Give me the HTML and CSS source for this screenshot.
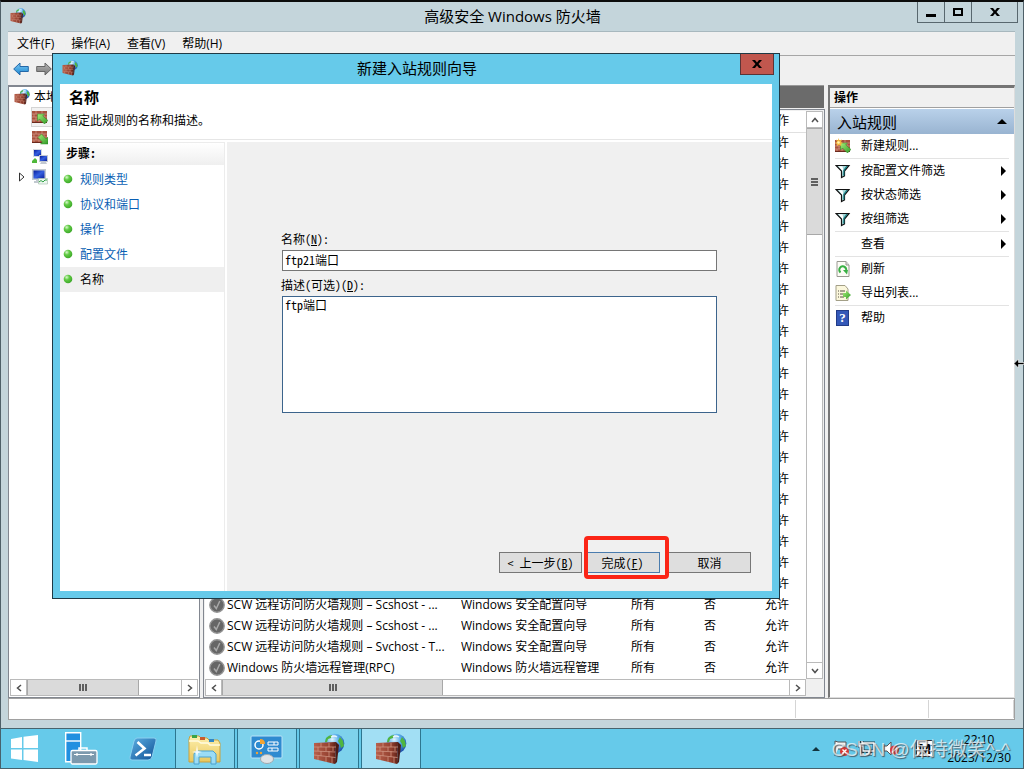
FILE: index.html
```html
<!DOCTYPE html>
<html lang="zh-CN">
<head>
<meta charset="utf-8">
<title>高级安全 Windows 防火墙</title>
<link rel="stylesheet" href="styles.css">
</head>
<body>
<svg class="defs" aria-hidden="true">
  <defs>
    <radialGradient id="globe" cx=".38" cy=".3" r=".75"><stop offset="0" stop-color="#e2f6ff"/><stop offset=".45" stop-color="#58aeea"/><stop offset="1" stop-color="#1747a4"/></radialGradient>
    <linearGradient id="brick" x1="0" x2="1"><stop offset="0" stop-color="#b8604c"/><stop offset=".7" stop-color="#93402f"/><stop offset="1" stop-color="#5c2018"/></linearGradient>
    <linearGradient id="blue" x1="0" y1="0" x2="0" y2="1"><stop offset="0" stop-color="#7cc9f4"/><stop offset="1" stop-color="#1b86d0"/></linearGradient>
    <linearGradient id="grey" x1="0" y1="0" x2="0" y2="1"><stop offset="0" stop-color="#b5b5b5"/><stop offset="1" stop-color="#777"/></linearGradient>
    <linearGradient id="screen" x1="0" y1="0" x2="1" y2="1"><stop offset="0" stop-color="#0a1f9c"/><stop offset=".5" stop-color="#3560e0"/><stop offset="1" stop-color="#0a1f9c"/></linearGradient>
    <linearGradient id="folder" x1="0" y1="0" x2="0" y2="1"><stop offset="0" stop-color="#fdf0ae"/><stop offset="1" stop-color="#e9c75c"/></linearGradient>
    <linearGradient id="shell" x1="0" y1="0" x2="1" y2="1"><stop offset="0" stop-color="#5cb0e4"/><stop offset="1" stop-color="#0f4f94"/></linearGradient>
    <linearGradient id="leaf" x1="0" y1="0" x2="1" y2="1"><stop offset="0" stop-color="#a4ec78"/><stop offset="1" stop-color="#2f9a26"/></linearGradient>
    <radialGradient id="bead" cx=".35" cy=".3" r=".75"><stop offset="0" stop-color="#d8f7cc"/><stop offset=".4" stop-color="#62cb45"/><stop offset="1" stop-color="#3aa627"/></radialGradient>
    <symbol id="i-firewall" viewBox="0 0 32 32">
      <circle cx="21.500" cy="10.500" r="9.800" fill="url(#globe)"/>
      <path d="M13 5q3-3 6-3l-1 3-3 1-1 3-2 0zM27 4l3 4 1 5-3 2-1-4-2-3z" fill="#4fb63e"/>
      <path d="M18 4q3-2 6 0" stroke="#fff" stroke-width="1.500" fill="none" opacity=".8"/>
      <path d="M1 10l22-1-1 22-21-5z" fill="url(#brick)"/>
      <path d="M23 9l3 3-2 17-2 2z" fill="#4d1b14"/>
      <path d="M1 14l22 0M1 18l21.500 1M1 22l21.500 2.500M8 10v4M16 10v4M5 14v4M13 14v4M20 14v4M8 18v5M16 18v6M5 23v4M13 24v5M19 24v6" stroke="#cf9482" stroke-width=".8" fill="none"/>
    </symbol>
    <symbol id="i-wall" viewBox="0 0 16 16">
      <path d="M0 2h15v12H0z" fill="#a8523e"/><path d="M0 5h15M0 8h15M0 11h15M4 2v3M10 2v3M2 5v3M7 5v3M12 5v3M4 8v3M10 8v3M2 11v3M7 11v3" stroke="#cf9583" stroke-width=".8" fill="none"/><path d="M0 13.500h15" stroke="#6c2a1e"/>
    </symbol>
    <symbol id="i-in" viewBox="0 0 16 16"><use href="#i-wall"/><path d="M5.500 5h7l-1.800 1.900L16 11.500 12.500 15 7.500 10l-2 2z" fill="url(#leaf)" stroke="#2f8a28" stroke-width=".5"/></symbol>
    <symbol id="i-out" viewBox="0 0 16 16"><use href="#i-wall"/><path d="M16 15H8.500l2-2L6 8.500 9.500 5l4.500 4.800L16 8z" fill="url(#leaf)" stroke="#2f8a28" stroke-width=".5"/></symbol>
    <symbol id="i-new" viewBox="0 0 16 16"><use href="#i-in"/><path d="M3.500 0l1 2.500L7 1.500 6 4l2 1-2 1 .500 2-2.500-1L2 8V6L0 5l2-1L1 1.500l2 1z" fill="#f5b83d"/><circle cx="3.500" cy="4.500" r="1.300" fill="#fff6b0"/></symbol>
    <symbol id="i-net" viewBox="0 0 16 16"><path d="M1 0h9v8H1z" fill="#d4d9e0"/><path d="M2 1h7v6H2z" fill="url(#screen)"/><path d="M7 6h9v7H7zM9 13h5l1 2H8z" fill="#c3c9d2"/><path d="M8 7h7v5H8z" fill="url(#screen)"/><path d="M0 12l3-3 2 2v3H0z" fill="#4fb83a"/></symbol>
    <symbol id="i-monitor" viewBox="0 0 16 16"><path d="M0 0h14v11H0zM4 11h5v1h3v2H2v-2h2z" fill="#c2c9d0"/><path d="M1.500 1.500h11v8h-11z" fill="url(#screen)"/><path d="M6.500 9.500h9v5.500h-9z" fill="#eef8f1" stroke="#9fb8a8" stroke-width=".6"/><path d="M7 13l2-1.500 2 1.500 2-2 2 0" stroke="#2ea043" fill="none"/></symbol>
    <symbol id="i-filter" viewBox="0 0 16 16"><path d="M1 2.500h13L9.500 8v5l-3 1.500V8z" fill="#a6d6d8" stroke="#111" stroke-width="1.200"/><path d="M3.500 3.200h4l1 5v4L7.500 8z" fill="#fff"/><path d="M12 3.200L8.800 7.500v5" stroke="#177f84" stroke-width="1.200" fill="none"/></symbol>
    <symbol id="i-refresh" viewBox="0 0 16 16"><path d="M2 .500h9L14 4v11.500H2z" fill="#fcfcf6" stroke="#9a9a92"/><path d="M11 .500V4h3" fill="#ddd" stroke="#9a9a92"/><path d="M5.500 11.500A3.500 3.500 0 1 1 10.500 11" fill="none" stroke="#39b044" stroke-width="2"/><path d="M8 9l5 0-1 4.500z" fill="#39b044"/></symbol>
    <symbol id="i-export" viewBox="0 0 16 16"><path d="M1 .500h9L13 4v11.500H1z" fill="#fbf7dc" stroke="#a39f87"/><path d="M3 6h1M3 9h1M3 12h1M5 6h5M5 9h4M5 12h4" stroke="#554f44"/><path d="M8 8h3V5.500l5 4.500-5 4.500V12H8z" fill="url(#leaf)"/></symbol>
    <symbol id="i-check" viewBox="0 0 16 16"><circle cx="8" cy="8" r="7.200" fill="#666" stroke="#949494" stroke-width="1.400"/><path d="M5 8.500L7.300 11.500l3.500-7.500" fill="none" stroke="#a8a8a8" stroke-width="1.500"/></symbol>
    <symbol id="i-close" viewBox="0 0 10 8"><path d="M0 0h3l2 2.500L7 0h3L6.500 4 10 8H7L5 5.500 3 8H0l3.500-4z" fill="#000"/></symbol>
    <symbol id="i-chev" viewBox="0 0 8 8"><path d="M1 6l3-3.500L7 6" fill="none" stroke="#505050" stroke-width="1.500"/></symbol>
    <symbol id="i-tri" viewBox="0 0 6 12"><path d="M0 1l5 5-5 5z"/></symbol>
    <symbol id="i-bead" viewBox="0 0 10 10"><circle cx="5" cy="5" r="4.300" fill="url(#bead)"/></symbol>
  </defs>
</svg>

<main class="window">
  <header class="titlebar">
    <svg class="ic16"><use href="#i-firewall"/></svg>
    <h1 class="title">高级安全 Windows 防火墙</h1>
    <div class="winbtns">
      <button class="winbtn" aria-label="最小化"><svg width="10" height="12"><path d="M0 8h10v3H0z"/></svg></button>
      <button class="winbtn" aria-label="最大化"><svg width="10" height="10"><path d="M1 2h8v6H1z" fill="none" stroke="#000" stroke-width="2"/></svg></button>
      <button class="winbtn winbtn-close" aria-label="关闭"><svg width="10" height="8"><use href="#i-close"/></svg></button>
    </div>
  </header>

  <div class="client">
    <nav class="menubar">
      <button class="menu">文件(F)</button><button class="menu">操作(A)</button><button class="menu">查看(V)</button><button class="menu">帮助(H)</button>
    </nav>
    <div class="toolbar">
      <button class="tool" aria-label="后退"><svg width="16" height="14" viewBox="0 0 16 14"><path d="M.700 7L7 1v3.500h8.300v5H7V13z" fill="url(#blue)" stroke="#2468a8"/></svg></button>
      <button class="tool" aria-label="前进"><svg width="16" height="14" viewBox="0 0 16 14"><path d="M15.300 7L9 1v3.500H.700v5H9V13z" fill="url(#grey)" stroke="#666"/></svg></button>
    </div>

    <div class="panes">
      <section class="tree-pane">
        <ul class="tree">
          <li class="node"><svg class="ic16"><use href="#i-firewall"/></svg><span>本地计算机</span></li>
          <li class="node child"><span class="picked"><svg class="ic16"><use href="#i-in"/></svg></span></li>
          <li class="node child"><svg class="ic16"><use href="#i-out"/></svg></li>
          <li class="node child"><svg class="ic16"><use href="#i-net"/></svg></li>
          <li class="node parent"><svg width="6" height="10"><path d="M.500 1l4.500 4-4.500 4z" fill="#fff" stroke="#333"/></svg><svg class="ic16"><use href="#i-monitor"/></svg></li>
        </ul>
        <div class="hbar">
          <button class="sbtn" aria-label="向左"><svg class="chev left"><use href="#i-chev"/></svg></button>
          <div class="track"><div class="thumb thumb-tree"><i class="grip"></i></div></div>
          <button class="sbtn" aria-label="向右"><svg class="chev right"><use href="#i-chev"/></svg></button>
        </div>
      </section>

      <section class="center-pane">
        <div class="caption"></div>
        <div class="list">
          <div class="rows">
            <table class="rules">
              <colgroup><col class="c-name"><col class="c-group"><col class="c-profile"><col class="c-on"><col></colgroup>
              <thead><tr><th></th><th></th><th></th><th></th><th>操作</th></tr></thead>
              <tbody>
                <tr><td colspan="4"></td><td>允许</td></tr>
                <tr><td colspan="4"></td><td>允许</td></tr>
                <tr><td colspan="4"></td><td>允许</td></tr>
                <tr><td colspan="4"></td><td>允许</td></tr>
                <tr><td colspan="4"></td><td>允许</td></tr>
                <tr><td colspan="4"></td><td>允许</td></tr>
                <tr><td colspan="4"></td><td>允许</td></tr>
                <tr><td colspan="4"></td><td>允许</td></tr>
                <tr><td colspan="4"></td><td>允许</td></tr>
                <tr><td colspan="4"></td><td>允许</td></tr>
                <tr><td colspan="4"></td><td>允许</td></tr>
                <tr><td colspan="4"></td><td>允许</td></tr>
                <tr><td colspan="4"></td><td>允许</td></tr>
                <tr><td colspan="4"></td><td>允许</td></tr>
                <tr><td colspan="4"></td><td>允许</td></tr>
                <tr><td colspan="4"></td><td>允许</td></tr>
                <tr><td colspan="4"></td><td>允许</td></tr>
                <tr><td colspan="4"></td><td>允许</td></tr>
                <tr><td colspan="4"></td><td>允许</td></tr>
                <tr><td colspan="4"></td><td>允许</td></tr>
                <tr><td colspan="4"></td><td>允许</td></tr>
                <tr><td colspan="4"></td><td>允许</td></tr>
                <tr><td><div class="rule"><svg class="ic16"><use href="#i-check"/></svg>SCW 远程访问防火墙规则 – Scshost - ...</div></td><td>Windows 安全配置向导</td><td>所有</td><td>否</td><td>允许</td></tr>
                <tr><td><div class="rule"><svg class="ic16"><use href="#i-check"/></svg>SCW 远程访问防火墙规则 – Scshost - ...</div></td><td>Windows 安全配置向导</td><td>所有</td><td>否</td><td>允许</td></tr>
                <tr><td><div class="rule"><svg class="ic16"><use href="#i-check"/></svg>SCW 远程访问防火墙规则 – Svchost - T...</div></td><td>Windows 安全配置向导</td><td>所有</td><td>否</td><td>允许</td></tr>
                <tr><td><div class="rule"><svg class="ic16"><use href="#i-check"/></svg>Windows 防火墙远程管理(RPC)</div></td><td>Windows 防火墙远程管理</td><td>所有</td><td>否</td><td>允许</td></tr>
              </tbody>
            </table>
          </div>
          <div class="vbar">
            <button class="sbtn" aria-label="向上"><svg class="chev"><use href="#i-chev"/></svg></button>
            <div class="track"><div class="thumb thumb-v"><i class="grip grip-v"></i></div></div>
            <button class="sbtn" aria-label="向下"><svg class="chev down"><use href="#i-chev"/></svg></button>
          </div>
          <div class="hbar">
            <button class="sbtn" aria-label="向左"><svg class="chev left"><use href="#i-chev"/></svg></button>
            <div class="track"><div class="thumb thumb-list"><i class="grip"></i></div></div>
            <button class="sbtn" aria-label="向右"><svg class="chev right"><use href="#i-chev"/></svg></button>
          </div>
        </div>
      </section>

      <aside class="actions">
        <h2 class="actions-head">操作</h2>
        <div class="actions-group"><span>入站规则</span><svg width="10" height="5"><path d="M0 5l5-5 5 5z"/></svg></div>
        <div class="block"><button class="action"><svg class="ic16"><use href="#i-new"/></svg><span>新建规则...</span></button></div>
        <div class="block">
          <button class="action"><svg class="ic16"><use href="#i-filter"/></svg><span>按配置文件筛选</span><svg class="more"><use href="#i-tri"/></svg></button>
          <button class="action"><svg class="ic16"><use href="#i-filter"/></svg><span>按状态筛选</span><svg class="more"><use href="#i-tri"/></svg></button>
          <button class="action"><svg class="ic16"><use href="#i-filter"/></svg><span>按组筛选</span><svg class="more"><use href="#i-tri"/></svg></button>
        </div>
        <div class="block"><button class="action"><svg class="ic16"></svg><span>查看</span><svg class="more"><use href="#i-tri"/></svg></button></div>
        <div class="block">
          <button class="action"><svg class="ic16"><use href="#i-refresh"/></svg><span>刷新</span></button>
          <button class="action"><svg class="ic16"><use href="#i-export"/></svg><span>导出列表...</span></button>
        </div>
        <div class="block"><button class="action"><span class="help" aria-hidden="true">?</span><span>帮助</span></button></div>
      </aside>
    </div>

    <footer class="status"><span class="st-main"></span><span class="st-mid"></span><span class="st-end"></span></footer>
  </div>
</main>

<section class="dialog" role="dialog" aria-labelledby="dlg-title">
  <header class="dlg-bar">
    <svg class="ic16"><use href="#i-firewall"/></svg>
    <h2 class="title" id="dlg-title">新建入站规则向导</h2>
    <button class="dlg-close" aria-label="关闭"><svg width="10" height="8"><use href="#i-close"/></svg></button>
  </header>
  <div class="dlg-body">
    <div class="dlg-head"><h3>名称</h3><p>指定此规则的名称和描述。</p></div>
    <div class="dlg-main">
      <nav class="steps">
        <h4>步骤:</h4>
        <ol>
          <li><svg class="bead"><use href="#i-bead"/></svg><a href="#">规则类型</a></li>
          <li><svg class="bead"><use href="#i-bead"/></svg><a href="#">协议和端口</a></li>
          <li><svg class="bead"><use href="#i-bead"/></svg><a href="#">操作</a></li>
          <li><svg class="bead"><use href="#i-bead"/></svg><a href="#">配置文件</a></li>
          <li class="current"><svg class="bead"><use href="#i-bead"/></svg><span>名称</span></li>
        </ol>
      </nav>
      <form class="form">
        <div class="fields">
          <label for="name">名称(<u>N</u>):</label>
          <input id="name" type="text" value="ftp21端口">
          <label for="desc">描述(可选)(<u>D</u>):</label>
          <textarea id="desc">ftp端口</textarea>
        </div>
        <div class="buttons">
          <button type="button" class="btn">&lt; 上一步(<u>B</u>)</button>
          <span class="finish"><button type="button" class="btn btn-default">完成(<u>F</u>)</button></span>
          <button type="button" class="btn">取消</button>
        </div>
      </form>
    </div>
  </div>
</section>

<footer class="taskbar">
  <button class="launch" aria-label="开始"><svg width="28" height="27" viewBox="0 0 28 27"><path d="M0 4l11-2v11H0zM12.500 1.700L27 0v13H12.500zM0 14.500h11v10.500L0 23.500zM12.500 14.500H27V27l-14.500-2z" fill="#fff"/></svg></button>
  <button class="launch" aria-label="服务器管理器"><svg width="33" height="33" viewBox="0 0 33 33"><path d="M.700.700h15v29H.700z" fill="#218fe0" stroke="#fff" stroke-width="1.400"/><path d="M1 9h15" stroke="#fff" stroke-width="1.400"/><path d="M14 19v-3h8v3" fill="none" stroke="#fff" stroke-width="1.500"/><rect x="6" y="18.500" width="26" height="13.500" rx="1.500" fill="#7c99ad" stroke="#fff" stroke-width="1.300"/><path d="M9 22.500h20M12 21v3M26 21v3" stroke="#fff" stroke-width="1.200"/></svg></button>
  <button class="launch" aria-label="PowerShell"><svg width="28" height="24" viewBox="0 0 28 24"><path d="M8 1h17q3 0 2 3l-4 16q-1 3-4 3H3q-3 0-2-3L5 4q1-3 3-3z" fill="url(#shell)" stroke="#8bd0f0"/><path d="M8.500 5l7 6.500-9 7M15 18h7" fill="none" stroke="#fff" stroke-width="2.600"/></svg></button>
  <button class="task" aria-label="文件资源管理器"><svg width="34" height="32" viewBox="0 0 34 32"><path d="M1 6l1-3h9l2 2h6l2 2h9l2 3v19H1z" fill="url(#folder)" stroke="#c9a13c"/><path d="M4 2h5v3H4z" fill="#3aa443"/><path d="M12 4h5v3h-5z" fill="#c85c2c"/><path d="M21 6h5v3h-5z" fill="#3286c4"/><path d="M1 8h9l3 2h7l2 2h10" stroke="#fffbe0" fill="none" stroke-width="1.500"/><path d="M6 31V21l2-3h17l3 3v10h-5v-7H11v7z" fill="#9bdcf5" stroke="#4aa2cf"/><path d="M9 12l1 6 4 1-4 1-1 5-1-5-4-1 4-1z" fill="#fff" opacity=".85"/></svg></button>
  <button class="task" aria-label="控制面板"><svg width="34" height="30" viewBox="0 0 34 30"><rect x="1" y="2" width="31" height="22" rx="1" fill="#2e8ad0" stroke="#b9e3f8"/><circle cx="9" cy="11" r="4" fill="none" stroke="#fff" stroke-width="1.500"/><path d="M10 5v5h5q0-5-5-5z" fill="#f5a431"/><path d="M18 8h10v3H18zM18 14h10v3H18z" fill="none" stroke="#fff"/><path d="M24 8v3M22 14v3" stroke="#fff"/><circle cx="7" cy="19" r="1.200" fill="#f5a431"/><circle cx="11" cy="19" r="1.200" fill="#f5a431"/><ellipse cx="17" cy="25" rx="6.500" ry="4.500" fill="#dfe3e6" stroke="#a0a8ad"/></svg></button>
  <button class="task" aria-label="防火墙"><svg width="32" height="32"><use href="#i-firewall"/></svg></button>
  <button class="task task-active" aria-label="高级安全 Windows 防火墙"><svg width="32" height="32"><use href="#i-firewall"/></svg></button>
  <div class="tray">
    <svg class="tray-up" width="8" height="4"><path d="M0 4l4-4 4 4z" fill="#12343f"/></svg>
    <svg width="17" height="17" viewBox="0 0 17 17"><path d="M2 16V1l3 1h8v7H5" fill="#f4f4f4" stroke="#555"/><circle cx="11.500" cy="11.500" r="4.500" fill="#d83a34"/><path d="M9.500 9.500l4 4M13.500 9.500l-4 4" stroke="#fff" stroke-width="1.400"/></svg>
    <svg width="17" height="17" viewBox="0 0 17 17"><path d="M5 3h11v8H5zM8 14h6M11 11v3M1 1v5h3V1M2.500 6v8H6" fill="none" stroke="#263c45" stroke-width="3"/><path d="M5 3h11v8H5zM8 14h6M11 11v3M1 1v5h3V1M2.500 6v8H6" fill="none" stroke="#fff" stroke-width="1.300"/></svg>
    <svg width="17" height="17" viewBox="0 0 17 17"><path d="M1 6h3l4-4v13l-4-4H1z" fill="#fff" stroke="#555"/><circle cx="11.500" cy="10" r="4.500" fill="#d83a34"/><path d="M9 12.500L14 7.500" stroke="#fff" stroke-width="1.400"/></svg>
    <span class="ime">M</span>
    <div class="clock"><span>22:10</span><span>2023/12/30</span></div>
  </div>
</footer>

<svg class="cursor" width="10" height="9" viewBox="0 0 10 9"><path d="M0 4.500L4.500 0v3.500H10v2H4.500V9z" stroke="#fff" stroke-width=".6"/></svg>
<div class="watermark">CSDN @保持微笑^-^</div>
</body>
</html>
```
FILE: styles.css
```css
* { box-sizing: border-box; }
body {
  margin: 0;
  height: 100vh;
  display: flex;
  flex-direction: column;
  position: relative;
  overflow: hidden;
  background: #c4d5db;
  color: #000;
  font: 12px/16px "Open Sans", "Noto Sans CJK SC", sans-serif;
}
button { font: inherit; color: inherit; margin: 0; padding: 0; border: 0; background: none; }
h1, h2, h3, h4, p, ul, ol { margin: 0; padding: 0; list-style: none; }
svg { display: block; flex: none; }
.defs { position: absolute; width: 0; height: 0; }
.ic16 { width: 16px; height: 16px; }
.title { font-size: 15px; line-height: 20px; font-weight: 400; text-align: center; }

/* main window */
.window {
  flex: 1;
  min-height: 0;
  display: flex;
  flex-direction: column;
  border: 1px solid #4f6068;
  border-top: 2px solid #0c0c0c;
  border-bottom: 0;
  padding: 0 8px 8px 7px;
  background: #c4d5db;
}
.titlebar { height: 29px; display: grid; grid-template-columns: 1fr auto 1fr; align-items: center; padding: 0 0 2px 2px; }
.winbtns { display: flex; justify-content: flex-end; align-self: start; margin-right: -3px; }
.winbtn { width: 28px; height: 21px; border: 1px solid #58676e; border-top: 0; margin-left: -1px; display: grid; place-items: center; }
.winbtn-close { width: 47px; }
.client { flex: 1; min-height: 0; display: flex; flex-direction: column; background: #f0f0f0; border-top: 1px solid #a8b8be; }
.menubar { height: 24px; display: flex; gap: 17px; padding-left: 9px; border-bottom: 1px solid #a6a6a6; }
.toolbar { height: 29px; display: flex; align-items: center; gap: 7px; padding: 0 0 4px 5px; }
.panes { flex: 1; min-height: 0; display: flex; gap: 3px; }

/* tree */
.tree-pane { width: 192px; display: flex; flex-direction: column; background: #fff; border: 1px solid #828790; border-top: 2px solid #828790; padding: 0 1px 1px; }
.tree { flex: 1; }
.node { height: 20px; display: flex; align-items: center; gap: 4px; padding-left: 4px; white-space: nowrap; overflow: hidden; }
.child { padding-left: 22px; }
.parent { padding-left: 9px; gap: 7px; }
.picked { width: 100%; padding: 1px 0; margin-left: -1px; border: 1px solid #d4d4d4; background: #f2f2f2; }

/* scroll bars */
.sbtn { width: 17px; height: 17px; background: #fff; border: 1px solid #bababa; display: grid; place-items: center; flex: none; }
.chev { width: 8px; height: 8px; }
.left { transform: rotate(-90deg); }
.right { transform: rotate(90deg); }
.down { transform: rotate(180deg); }
.hbar, .vbar { display: flex; background: #fff; }
.hbar { height: 17px; border-top: 1px solid #bababa; border-bottom: 1px solid #bababa; }
.hbar .sbtn { height: 15px; border-width: 0 1px; }
.vbar { flex-direction: column; border-right: 1px solid #bababa; border-left: 1px solid #bababa; }
.vbar .sbtn { width: 15px; border-width: 1px 0; }
.track { flex: 1; }
.thumb { background: #dadada; border: 1px solid #a8a8a8; display: grid; place-items: center; }
.hbar .thumb { height: 15px; border-width: 0 1px; }
.thumb-tree { width: 73%; }
.thumb-list { width: 39%; }
.thumb-v { height: 107px; border-width: 1px 0; }
.grip { width: 8px; height: 7px; background: repeating-linear-gradient(90deg, #606060 0 2px, transparent 2px 3px); }
.grip-v { width: 7px; height: 8px; background: repeating-linear-gradient(#606060 0 2px, transparent 2px 3px); }

/* rule list */
.center-pane { flex: 1; min-width: 0; display: flex; flex-direction: column; gap: 1px; }
.caption { height: 23px; margin-right: 1px; background: #6b6b6b; border-top: 1px solid #999; }
.list { flex: 1; min-height: 0; display: grid; grid-template: minmax(0, 1fr) 17px / minmax(0, 1fr) 17px; background: #f0f0f0; border: 1px solid #828790; padding: 1px; }
.rows { overflow: hidden; background: #fff; }
.rules { width: 100%; table-layout: fixed; border-collapse: collapse; }
.rules th, .rules td { height: 21px; padding: 0; font-weight: 400; text-align: left; white-space: nowrap; overflow: hidden; }
.rules th { border-bottom: 1px solid #e0e0e0; }
.rule { display: flex; align-items: center; gap: 2px; padding-left: 4px; }
.c-name { width: 256px; }
.c-group { width: 170px; }
.c-profile { width: 73px; }
.c-on { width: 61px; }

/* actions */
.actions { width: 187px; background: #fff; border: 1px solid #ddd; border-top: 3px solid #747474; border-left: 2px solid #777; }
.actions-head { height: 20px; padding-left: 4px; font-size: 12px; line-height: 19px; background: #f0f0f0; border-bottom: 1px solid #a0a0a0; }
.actions-group { height: 25px; margin-top: 1px; display: flex; align-items: center; justify-content: space-between; padding: 0 7px; font-size: 15px; background: linear-gradient(#b9d1ea, #99b4d1); }
.block { margin: 0 5px; }
.block + .block { border-top: 1px solid #e3e3e3; }
.action { width: 100%; height: 24px; display: flex; align-items: center; gap: 10px; text-align: left; }
.more { width: 6px; height: 12px; margin: 0 2px 0 auto; }
.help { width: 13px; height: 16px; margin: 0 2px 0 1px; background: #3458b8; border: 1px solid #223c88; color: #fff; font: 700 13px/14px "Liberation Serif", serif; text-align: center; }

.status { height: 22px; display: flex; padding: 1px 0; background: #fff; border: 1px solid #a0a0a0; }
.st-main { flex: 1; border-right: 1px solid #d5d5d5; }
.st-mid { width: 133px; border-right: 1px solid #d5d5d5; }
.st-end { width: 85px; border-right: 1px solid #d5d5d5; }

/* wizard */
.dialog {
  position: absolute;
  left: 52px;
  right: 244px;
  top: 53px;
  bottom: 170px;
  display: flex;
  flex-direction: column;
  padding: 0 7px 7px;
  background: #66caea;
  border: 1px solid #1f3944;
}
.dlg-bar { height: 30px; display: grid; grid-template-columns: 1fr auto 1fr; align-items: center; padding: 0 0 2px 2px; }
.dlg-close { width: 34px; height: 21px; justify-self: end; align-self: start; margin-right: -2px; background: #c1574e; border: 1px solid #5b3436; border-top: 0; display: grid; place-items: center; }
.dlg-body { flex: 1; min-height: 0; display: flex; flex-direction: column; background: #fff; font-family: "Noto Sans CJK SC", sans-serif; font-feature-settings: "hwid"; }
.dlg-head { height: 56px; padding: 3px 6px; border-bottom: 1px solid #e6e6e6; }
.dlg-head h3 { font-size: 15px; line-height: 20px; padding-left: 3px; }
.dlg-head p { margin-top: 5px; }
.dlg-main { flex: 1; min-height: 0; display: flex; gap: 2px; padding-top: 2px; }
.steps { width: 165px; border-right: 1px solid #ececec; }
.steps h4 { height: 23px; padding-left: 6px; font-size: 12px; line-height: 20px; border-top: 1px solid #ececec; background: linear-gradient(#fff, #efefef); }
.steps ol { padding-top: 2px; }
.steps li { height: 25px; display: flex; align-items: center; gap: 7px; padding: 0 0 2px 3px; }
.steps .bead { width: 10px; height: 10px; }
.steps a { color: #0a5fb4; text-decoration: none; }
.steps .current { background: #efefef; }
.form { flex: 1; min-width: 0; display: flex; flex-direction: column; justify-content: space-between; background: #f0f0f0; padding: 89px 21px 18px 54px; }
.fields { display: flex; flex-direction: column; margin-right: 34px; }
.fields label { margin-bottom: 3px; }
.fields input, .fields textarea { font: inherit; font-feature-settings: inherit; color: inherit; margin: 0 0 0 1px; padding: 0 2px; border: 1px solid #767676; border-radius: 0; background: #fff; outline: 0; resize: none; }
.fields input { height: 21px; margin-bottom: 6px; padding-bottom: 3px; }
.fields textarea { height: 117px; border-color: #3c648c; }
.buttons { display: flex; justify-content: flex-end; gap: 8px; }
.btn { width: 83px; height: 21px; background: #dedede; border: 1px solid #777; font-feature-settings: inherit; }
.btn-default { width: 100%; border-color: #4a7cae; display: block; }
.finish { width: 75px; margin-left: -5px; position: relative; }
.finish::after { content: ""; position: absolute; inset: -16px -9px -6px -1px; border: 4px solid #fb2516; border-radius: 4px; }

/* taskbar */
.taskbar { height: 41px; flex: none; display: flex; gap: 2px; background: #66caea; border: 1px solid #47626d; }
.launch, .task { width: 60px; display: grid; place-items: center; }
.launch:first-child { width: 48px; }
.task { border: solid #2d7690; border-width: 0 1px; background: #7ed2ec; }
.task-active { background: #a2dff4; }
.tray { margin-left: auto; display: flex; align-items: center; gap: 8px; padding-right: 12px; }
.tray-up { margin-right: 5px; }
.ime { width: 17px; height: 17px; margin-left: 8px; background: #fff; border: 1px solid #333; color: #000; font-size: 14px; line-height: 15px; font-weight: 700; text-align: center; }
.clock { display: flex; flex-direction: column; align-items: center; line-height: 18px; margin-left: 6px; }

.cursor { position: absolute; right: 0; top: 359px; }
.watermark { position: absolute; right: 14px; bottom: 6px; font: 19px/26px "Liberation Sans", "Noto Sans CJK SC", sans-serif; color: rgba(255, 255, 255, .7); text-shadow: 1px 1px 1px rgba(60, 70, 80, .8); white-space: nowrap; pointer-events: none; }
```
